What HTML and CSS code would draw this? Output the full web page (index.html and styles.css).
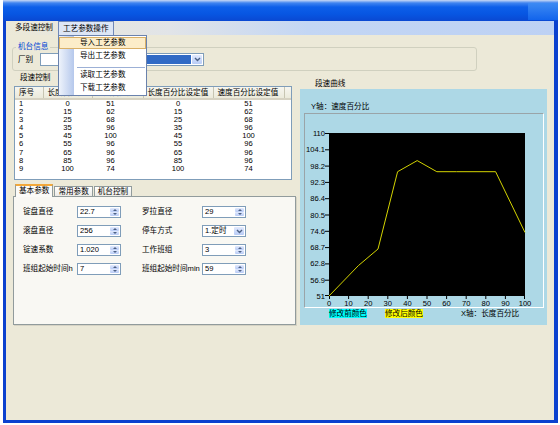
FILE: index.html
```html
<!DOCTYPE html>
<html lang="zh">
<head>
    <meta charset="UTF-8">
    <title>多段速控制</title>
    <link rel="stylesheet" href="styles.css">
</head>
<body>
<div class="window">
    <div class="titlebar"><span class="title-btn"></span></div>
    <div class="frame">
        <div class="menubar">
            <span class="menu-item">多段速控制</span>
            <span class="menu-item open">工艺参数操作</span>
        </div>

        <div class="client">
            <fieldset class="group">
                <legend>机台信息</legend>
                <div class="group-row">
                    <span class="factory-label">厂别</span>
                    <div class="combo wide">
                        <span class="sel"></span>
                        <span class="drop"><svg width="7" height="5" viewBox="0 0 7 5"><polyline points="1,1 3.5,3.5 6,1" fill="none" stroke="#4d6185" stroke-width="1.4"/></svg></span>
                    </div>
                </div>
            </fieldset>

            <div class="main">
                <div class="left-col">
                    <div class="caption">段速控制</div>
                    <div class="grid-box">
                        <table class="grid">
                            <colgroup>
                                <col style="width:28px"><col style="width:49px"><col style="width:51px">
                                <col style="width:70px"><col style="width:71px"><col style="width:7px">
                            </colgroup>
                            <tr>
                                <th>序号</th><th>长度百分比</th><th>速度百分比</th>
                                <th>长度百分比设定值</th><th>速度百分比设定值</th><th class="filler"></th>
                            </tr>
                            <tr><td class="no">1</td><td>0</td><td class="c3">51</td><td>0</td><td>51</td><td></td></tr>
                            <tr><td class="no">2</td><td>15</td><td class="c3">62</td><td>15</td><td>62</td><td></td></tr>
                            <tr><td class="no">3</td><td>25</td><td class="c3">68</td><td>25</td><td>68</td><td></td></tr>
                            <tr><td class="no">4</td><td>35</td><td class="c3">96</td><td>35</td><td>96</td><td></td></tr>
                            <tr><td class="no">5</td><td>45</td><td class="c3">100</td><td>45</td><td>100</td><td></td></tr>
                            <tr><td class="no">6</td><td>55</td><td class="c3">96</td><td>55</td><td>96</td><td></td></tr>
                            <tr><td class="no">7</td><td>65</td><td class="c3">96</td><td>65</td><td>96</td><td></td></tr>
                            <tr><td class="no">8</td><td>85</td><td class="c3">96</td><td>85</td><td>96</td><td></td></tr>
                            <tr><td class="no">9</td><td>100</td><td class="c3">74</td><td>100</td><td>74</td><td></td></tr>
                        </table>
                    </div>

                    <div class="tabs">
                        <span class="tab active">基本参数</span>
                        <span class="tab">常用参数</span>
                        <span class="tab">机台控制</span>
                    </div>
                    <div class="tab-panel">
                        <div class="form">
                            <span>锭盘直径</span>
                            <div class="spinbox"><span class="val">22.7</span><span class="spin"><b><i class="up"></i></b><b><i class="down"></i></b></span></div>
                            <span>罗拉直径</span>
                            <div class="spinbox"><span class="val">29</span><span class="spin"><b><i class="up"></i></b><b><i class="down"></i></b></span></div>

                            <span>滚盘直径</span>
                            <div class="spinbox"><span class="val">256</span><span class="spin"><b><i class="up"></i></b><b><i class="down"></i></b></span></div>
                            <span>停车方式</span>
                            <div class="combo small"><span class="val">1.定时</span><span class="drop"><svg width="7" height="5" viewBox="0 0 7 5"><polyline points="1,1 3.5,3.5 6,1" fill="none" stroke="#4d6185" stroke-width="1.4"/></svg></span></div>

                            <span>锭速系数</span>
                            <div class="spinbox"><span class="val">1.020</span><span class="spin"><b><i class="up"></i></b><b><i class="down"></i></b></span></div>
                            <span>工作班组</span>
                            <div class="spinbox"><span class="val">3</span><span class="spin"><b><i class="up"></i></b><b><i class="down"></i></b></span></div>

                            <span>班组起始时间h</span>
                            <div class="spinbox"><span class="val">7</span><span class="spin"><b><i class="up"></i></b><b><i class="down"></i></b></span></div>
                            <span>班组起始时间min</span>
                            <div class="spinbox"><span class="val">59</span><span class="spin"><b><i class="up"></i></b><b><i class="down"></i></b></span></div>
                        </div>
                    </div>
                </div>

                <div class="right-col">
                    <div class="caption right">段速曲线</div>
                    <div class="chart-panel">
                        <div class="y-title">Y轴：速度百分比</div>
                        <div class="chart-box">
                            <svg class="plot" width="238" height="193" viewBox="0 0 238 193">
                                <rect x="24" y="19" width="196" height="163" fill="#000"/>
                                <path stroke="#000" stroke-width="1" fill="none"
                                      d="M20 19.5h4M20 35.8h4M20 52.1h4M20 68.4h4M20 84.7h4M20 101h4M20 117.3h4M20 133.6h4M20 149.9h4M20 166.2h4M20 181.5h4
                                         M24.5 182v3M43.6 182v3M63.2 182v3M82.8 182v3M102.4 182v3M122 182v3M141.6 182v3M161.2 182v3M180.8 182v3M200.4 182v3M219.5 182v3"/>
                                <g class="ylab" text-anchor="end">
                                    <text x="20" y="22">110</text>
                                    <text x="20" y="38.3">104.1</text>
                                    <text x="20" y="54.6">98.2</text>
                                    <text x="20" y="70.9">92.3</text>
                                    <text x="20" y="87.2">86.4</text>
                                    <text x="20" y="103.5">80.5</text>
                                    <text x="20" y="119.8">74.6</text>
                                    <text x="20" y="136.1">68.7</text>
                                    <text x="20" y="152.4">62.8</text>
                                    <text x="20" y="168.7">56.9</text>
                                    <text x="20" y="185">51</text>
                                </g>
                                <g class="xlab" text-anchor="middle">
                                    <text x="24" y="192">0</text>
                                    <text x="43.6" y="192">10</text>
                                    <text x="63.2" y="192">20</text>
                                    <text x="82.8" y="192">30</text>
                                    <text x="102.4" y="192">40</text>
                                    <text x="122" y="192">50</text>
                                    <text x="141.6" y="192">60</text>
                                    <text x="161.2" y="192">70</text>
                                    <text x="180.8" y="192">80</text>
                                    <text x="200.4" y="192">90</text>
                                    <text x="220" y="192">100</text>
                                </g>
                                <polyline fill="none" stroke="#d4d400" stroke-width="1"
                                          points="24,182 53.4,151.6 73,135 92.6,57.7 112.2,46.6 131.8,57.7 151.4,57.7 190.6,57.7 220,118.5"/>
                            </svg>
                        </div>
                        <div class="legend">
                            <span class="before">修改前颜色</span>
                            <span class="after">修改后颜色</span>
                            <span class="x-title">X轴：长度百分比</span>
                        </div>
                    </div>
                </div>
            </div>
        </div>
    </div>

    <!-- open menu: 工艺参数操作 -->
    <div class="dropdown">
        <div class="mi hot">导入工艺参数</div>
        <div class="mi">导出工艺参数</div>
        <div class="sep"></div>
        <div class="mi">读取工艺参数</div>
        <div class="mi">下载工艺参数</div>
    </div>
</div>
</body>
</html>
```

FILE: styles.css
```css
* {
    box-sizing: border-box;
}

body {
    margin: 0;
    background: #ffffff;
    font: 7.6px/1 "Liberation Sans", "Noto Sans CJK SC", sans-serif;
    color: #000;
}

.window {
    position: relative;
    width: 555px;
    height: 423px;
    margin-left: 3px;
}

.titlebar {
    display: flex;
    height: 21px;
    background: linear-gradient(#c9d9f5 0, #3f84f0 3px, #0d5fe9 7px, #0756e2 14px, #0a48d2 21px);
}

.title-btn {
    margin: 3px 0 0 auto;
    width: 30px;
    height: 17px;
    background: linear-gradient(#3d8af3, #1264ec);
}

.frame {
    height: 402px;
    border: solid #0b41cf;
    border-width: 0 4px 3px 3px;
    background: #ece9d8;
}

/* menu bar */
.menubar {
    display: flex;
    height: 14px;
    padding-left: 4px;
    background: linear-gradient(to right, #ece9d8 0, #e1e4e8 30%, #c3d6f4 55%, #bdd1f4 100%);
}

.menu-item {
    padding: 0 5px;
    line-height: 14px;
    white-space: nowrap;
}

.menu-item.open {
    padding: 0 4px;
    line-height: 13px;
    background: #dde6f5;
    border: 1px solid #7088b8;
    border-bottom: none;
}

.dropdown {
    position: absolute;
    left: 55px;
    top: 35px;
    width: 89px;
    height: 61px;
    padding-top: 1px;
    border: 1px solid #6a82ad;
    background: linear-gradient(to right, #eef3fb 0, #b5c8ec 15px, #ffffff 15px);
}

.mi {
    height: 13.5px;
    line-height: 13.5px;
    padding-left: 21px;
    white-space: nowrap;
}

.mi.hot {
    height: 12px;
    line-height: 10px;
    padding-left: 20px;
    background: #fcedc9;
    border: 1px solid #d9b067;
}

.sep {
    height: 5px;
    margin: 0 1px 0 18px;
    border-bottom: 1px solid #9cb0d6;
}

/* client area */
.client {
    padding: 0 7px;
}

.group {
    width: 465px;
    min-width: 0;
    margin: 7px 0 0 -1px;
    padding: 1px 6px 4px 3px;
    border: 1px solid #d0d0bf;
    border-radius: 3px;
}

.group legend {
    padding: 0 2px;
    line-height: 10px;
    color: #0046d5;
}

.group-row {
    display: flex;
    align-items: center;
}

.factory-label {
    margin-left: 2px;
    margin-right: 7px;
}

.combo {
    display: flex;
    height: 13px;
    padding: 1px;
    border: 1px solid #7f9db9;
    background: #fff;
}

.combo.wide {
    width: 164px;
}

.combo .sel {
    flex: 1;
    margin-left: 19px;
    background: #316ac5;
}

.combo .val {
    flex: 1;
    padding-left: 2px;
    line-height: 9px;
}

.drop {
    display: flex;
    align-items: center;
    justify-content: center;
    width: 10px;
    margin-left: 1px;
    border-radius: 1px;
    background: linear-gradient(#e2eafd, #b8cbf6);
}

.main {
    display: flex;
    gap: 4px;
    margin-top: 1px;
}

.left-col {
    width: 283px;
}

.right-col {
    width: 247px;
}

.caption {
    padding-left: 7px;
    line-height: 12px;
}

.caption.right {
    margin-top: 6px;
    padding-left: 15px;
    line-height: 11px;
}

/* list grid */
.grid-box {
    width: 278px;
    height: 94px;
    margin: 2px 0 0 1px;
    border: 1px solid #7f9db9;
    background: #fff;
    overflow: hidden;
}

.grid {
    width: 276px;
    border-collapse: collapse;
    table-layout: fixed;
}

.grid th {
    height: 12px;
    padding: 0 0 0 4px;
    background: linear-gradient(#f6f5ef, #ebeadb);
    border-right: 1px solid #c7c5b2;
    border-bottom: 2px solid #d6d2c2;
    font-weight: normal;
    text-align: left;
    white-space: nowrap;
    overflow: hidden;
}

.grid th.filler {
    border-right: none;
}

.grid td {
    height: 8.1px;
    padding: 0;
    line-height: 8px;
    text-align: center;
    white-space: nowrap;
}

.grid td.no {
    padding-left: 4px;
    text-align: left;
}

.grid td.c3 {
    padding-right: 14px;
}

/* tabs */
.tabs {
    display: flex;
    align-items: flex-end;
    height: 12px;
    margin-top: 4px;
    padding-left: 2px;
}

.tab {
    height: 10px;
    margin-left: 1px;
    padding: 0 3px;
    line-height: 9px;
    border: 1px solid #919b9c;
    border-bottom: none;
    background: linear-gradient(#ffffff, #ecebe6);
    white-space: nowrap;
}

.tab.active {
    position: relative;
    z-index: 1;
    height: 13px;
    margin: 0 0 -1px 0;
    line-height: 10px;
    border-top: 2px solid #f2a83a;
    background: #fbfbf8;
}

.tab-panel {
    height: 129px;
    border: 1px solid #919b9c;
    background: #f9f8f3;
    box-shadow: 1px 1px 0 #d6d3c4;
}

.form {
    display: grid;
    grid-template-columns: 54px 65px 60px 45px;
    grid-auto-rows: 12px;
    row-gap: 7px;
    align-items: center;
    padding: 9px 0 0 9px;
    white-space: nowrap;
}

.spinbox {
    display: flex;
    width: 44px;
    height: 12px;
    border: 1px solid #7f9db9;
    background: #fff;
}

.spinbox .val {
    flex: 1;
    padding-left: 2px;
    line-height: 9px;
}

.combo.small {
    width: 44px;
    height: 12px;
    padding: 0;
}

.combo.small .drop {
    margin: 1px;
}

.spin {
    display: flex;
    flex-direction: column;
    width: 9px;
    margin: 1px 1px 1px 0;
}

.spin b {
    display: flex;
    flex: 1;
    align-items: center;
    justify-content: center;
    background: linear-gradient(#e2eafd, #b8cbf6);
    border-radius: 1px;
}

.spin i {
    width: 0;
    height: 0;
    border-left: 2px solid transparent;
    border-right: 2px solid transparent;
}

.spin i.up {
    border-bottom: 2px solid #4d6185;
}

.spin i.down {
    border-top: 2px solid #4d6185;
}

/* chart */
.chart-panel {
    height: 236px;
    padding: 0 3px 0 4px;
    background: #add8e6;
}

.y-title {
    padding: 12px 0 0 7px;
    line-height: 12px;
    white-space: nowrap;
}

.chart-box {
    width: 240px;
    height: 195px;
    border: 1px solid;
    border-color: #9aa4a8 #ffffff #ffffff #9aa4a8;
}

.plot {
    display: block;
    font-family: "Liberation Sans", sans-serif;
    font-size: 7.6px;
}

.legend {
    display: flex;
    margin-top: 1px;
    line-height: 9px;
    white-space: nowrap;
}

.legend .before {
    margin-left: 25px;
    background: #00ffff;
}

.legend .after {
    margin-left: 18px;
    background: #ffff00;
}

.legend .x-title {
    margin-left: 38px;
}
```
